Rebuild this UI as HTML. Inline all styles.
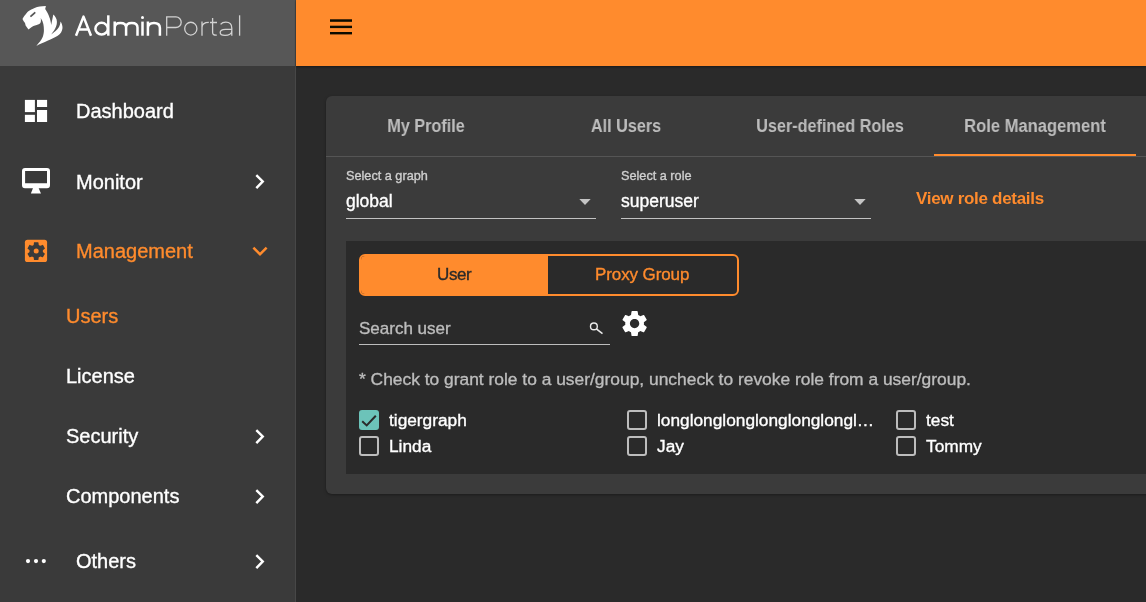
<!DOCTYPE html>
<html><head><meta charset="utf-8">
<style>
*{box-sizing:border-box;margin:0;padding:0}
html,body{-webkit-text-stroke:0.35px currentColor;width:1146px;height:602px;overflow:hidden;background:#2a2a2a;font-family:"Liberation Sans",sans-serif;}
.abs{position:absolute}
.t{position:absolute;white-space:nowrap;line-height:1;will-change:transform}
#side{position:absolute;left:0;top:0;width:296px;height:602px;background:#3a3a3a;border-right:1px solid #474747}
#logo{position:absolute;left:0;top:0;width:295px;height:66px;background:#575757}
#hdr{position:absolute;left:296px;top:0;width:850px;height:66px;background:#ff8b2d;box-shadow:0 1px 2px rgba(0,0,0,.4)}
.nav{font-size:20px;color:#fff}
.orange{color:#ff8b2d}
#card{position:absolute;left:326px;top:96px;width:840px;height:398px;background:#3b3b3b;border-radius:6px;box-shadow:0 1px 3px rgba(0,0,0,.35)}
.tab{font-size:18px;font-weight:bold;color:#bdbdbd;transform:scaleX(0.9);transform-origin:50% 50%;-webkit-text-stroke:0}
.lbl{font-size:12.7px;color:#cfcfcf}
.val{font-size:17.5px;color:#fff}
.uline{position:absolute;height:1px;background:#c2c2c2}
.cb{position:absolute;width:20px;height:20px;border:2px solid #bdbdbd;border-radius:3px}
.cbl{font-size:17.3px;color:#fff}
</style></head>
<body>
<div id="side">
  <div id="logo">
    <svg class="abs" style="left:0;top:0" width="295" height="66" viewBox="0 0 295 66">
      <path fill="#fff" d="M45.9 6 L45.2 9 C46.5 11 48.5 14.5 49.4 17.2 C50.3 19.5 50.9 22 51.2 25 C51.8 22 52.6 18 53.3 14.5 C55 16 56.8 18.5 56.9 21.5 C57 25 56 28.5 51.2 34.5 C54 32.5 57.5 29.5 59 27 C60 25 60.5 23 60.4 21.4 C61.8 23 62.6 25.5 62.5 27.9 C62.3 31 60.5 34 57.7 35.7 C55 37.5 51 39 48 40.5 C44 42.5 39.5 44 36.3 45.9 C39 43 41.5 40 42.7 37.1 C43.6 34.5 44 31.5 43.9 29.9 C43.9 26 43.5 22 40.7 18 C41.2 20.5 41 22.5 40 23.5 C38.5 25 36 25 35 25.4 C33 26 30.5 27.5 28.5 29.4 L27 27.4 C26 26 25.6 25.5 25.5 24.9 L25 22.9 L23.5 20.9 L22.5 18.9 C23 17.5 25 15 27.5 12 C29 10.5 31 9.5 32.5 9 C35 7.5 39 6.3 42.4 6.2 Z"/>
      <path d="M31 16.2 L34.7 12.8" stroke="#575757" stroke-width="1.8" stroke-linecap="round"/>
      <g fill="none" stroke="#fff" stroke-width="2.5" stroke-linejoin="round">
        <path d="M76 35.7 L83.5 16.6 L91 35.7 M78.6 29.6 H88.4"/>
        <ellipse cx="101.6" cy="28.65" rx="6.2" ry="5.8"/>
        <path d="M108.3 15.3 V35.7"/>
        <path d="M114.7 21.6 V35.7 M114.7 27.5 C114.7 24.5 116.8 22.9 120.4 22.9 C124 22.9 126.1 24.5 126.1 27.5 V35.7 M126.1 27.5 C126.1 24.5 128.2 22.9 131.8 22.9 C135.4 22.9 137.5 24.5 137.5 27.5 V35.7"/>
        <path d="M142.5 21.6 V35.7"/>
        <path d="M147.9 21.6 V35.7 M147.9 28 C147.9 24.6 150.3 22.9 154 22.9 C157.7 22.9 159.9 24.6 159.9 28 V35.7"/>
      </g>
      <circle cx="142.5" cy="17.4" r="1.5" fill="#fff"/>
      <g fill="none" stroke="#d2d2d2" stroke-width="1.3">
        <path d="M166.7 35.7 V16.9 H175.9 A5.3 5.3 0 0 1 175.9 27.5 H166.7"/>
        <ellipse cx="190.8" cy="28.65" rx="6.1" ry="6.4"/>
        <path d="M202 21.6 V35.7 M202 27.5 C202 24 204.5 22.3 208.8 22.3"/>
        <path d="M212.6 18 V32.5 C212.6 34.5 213.8 35.3 216.8 35.1 M210 22.5 H217"/>
        <path d="M220.6 24.3 C221.8 22.8 223.6 22.2 225.8 22.2 C229.6 22.2 231.8 24.4 231.8 28.2 V35.7 M231.8 29.3 H225.5 C222.2 29.3 220.2 30.6 220.2 32.5 C220.2 34.5 222.3 35.4 225 35.4 C229 35.4 231.8 33.5 231.8 30.8"/>
        <path d="M239.6 15.3 V35.7"/>
      </g>
    </svg>
  </div>
  <!-- dashboard icon -->
  <svg class="abs" style="left:0;top:0" width="60" height="200" viewBox="0 0 60 200">
    <g fill="#fff">
      <rect x="24.9" y="99.9" width="10" height="12.2"/>
      <rect x="24.9" y="114.8" width="10" height="7.2"/>
      <rect x="37" y="99.9" width="10.1" height="7.1"/>
      <rect x="37" y="110" width="10.1" height="12"/>
      <path fill-rule="evenodd" d="M25 168 H47 Q50 168 50 171 V185.3 Q50 188.3 47 188.3 H25 Q22 188.3 22 185.3 V171 Q22 168 25 168 Z M25.1 171 V183.2 H47 V171 Z"/>
      <path d="M33 188 L38.6 188 L41 193.4 L30.9 193.4 Z"/>
    </g>
  </svg>
  <div class="t nav" style="left:76px;top:101.1px">Dashboard</div>
  <div class="t nav" style="left:76px;top:171.5px">Monitor</div>
  <svg class="abs" style="left:245px;top:166.8px" width="29.2" height="29.2" viewBox="0 0 24 24"><path fill="#fff" d="M8.59 16.59L13.17 12 8.59 7.41 10 6l6 6-6 6-1.41-1.41z"/></svg>
  <!-- management -->
  <svg class="abs" style="left:0;top:200px" width="60" height="80" viewBox="0 200 60 80">
    <rect x="24.9" y="239.7" width="22.2" height="22.4" rx="2.6" fill="#ff8b2d"/>
    <g transform="translate(36.2 251.1) scale(0.93) translate(-12 -12)"><path fill="#3a3a3a" d="M19.14 12.94c.04-.3.06-.61.06-.94 0-.32-.02-.64-.07-.94l2.03-1.58a.49.49 0 00.12-.61l-1.92-3.32a.488.488 0 00-.59-.22l-2.39.96c-.5-.38-1.030-.7-1.62-.94l-.36-2.54a.484.484 0 00-.48-.41h-3.84c-.24 0-.43.17-.47.41l-.36 2.54c-.59.24-1.13.57-1.62.94l-2.39-.96c-.22-.08-.47 0-.59.22L2.74 8.87c-.12.21-.08.47.12.61l2.03 1.58c-.05.3-.09.63-.09.94s.02.64.07.94l-2.03 1.58a.49.49 0 00-.12.61l1.92 3.32c.12.22.37.29.59.22l2.39-.96c.5.38 1.03.7 1.62.94l.36 2.54c.05.24.24.41.48.41h3.84c.24 0 .44-.17.47-.41l.36-2.54c.59-.24 1.13-.56 1.62-.94l2.39.96c.22.08.47 0 .59-.22l1.92-3.32c.12-.22.07-.47-.12-.61l-2.010-1.58z"/></g>
    <circle cx="36.2" cy="251.1" r="2.5" fill="#ff8b2d"/>
  </svg>
  <div class="t nav orange" style="left:76px;top:240.8px">Management</div>
  <svg class="abs" style="left:244.9px;top:236.1px" width="30" height="30" viewBox="0 0 24 24"><path fill="#ff8b2d" d="M7.41 8.59L12 13.170l4.59-4.580L18 10l-6 6-6-6 1.41-1.41z"/></svg>
  <div class="t nav orange" style="left:66px;top:305.5px">Users</div>
  <div class="t nav" style="left:66px;top:365.6px">License</div>
  <div class="t nav" style="left:66px;top:425.7px">Security</div>
  <svg class="abs" style="left:245px;top:421.8px" width="29.2" height="29.2" viewBox="0 0 24 24"><path fill="#fff" d="M8.59 16.59L13.17 12 8.59 7.41 10 6l6 6-6 6-1.41-1.41z"/></svg>
  <div class="t nav" style="left:66px;top:485.9px">Components</div>
  <svg class="abs" style="left:245px;top:481.8px" width="29.2" height="29.2" viewBox="0 0 24 24"><path fill="#fff" d="M8.59 16.59L13.17 12 8.59 7.41 10 6l6 6-6 6-1.41-1.41z"/></svg>
  <svg class="abs" style="left:20px;top:555px" width="30" height="12" viewBox="20 555 30 12"><circle cx="28" cy="561.1" r="2.1" fill="#fff"/><circle cx="36" cy="561.1" r="2.1" fill="#fff"/><circle cx="43.8" cy="561.1" r="2.1" fill="#fff"/></svg>
  <div class="t nav" style="left:76px;top:550.8px">Others</div>
  <svg class="abs" style="left:245px;top:546.8px" width="29.2" height="29.2" viewBox="0 0 24 24"><path fill="#fff" d="M8.59 16.59L13.17 12 8.59 7.41 10 6l6 6-6 6-1.41-1.41z"/></svg>
</div>
<div id="hdr">
  <svg class="abs" style="left:0;top:0" width="80" height="66" viewBox="296 0 80 66"><g fill="#0b0b00"><rect x="330" y="19.3" width="22" height="2.5"/><rect x="330" y="25.7" width="22" height="2.4"/><rect x="330" y="32" width="22" height="2.4"/></g></svg>
</div>
<div id="card">
  <div class="t tab" style="left:0;width:200px;text-align:center;top:20.9px" id="tab1">My Profile</div>
  <div class="t tab" style="left:200px;width:200px;text-align:center;top:20.9px" id="tab2">All Users</div>
  <div class="t tab" style="left:404px;width:200px;text-align:center;top:20.9px" id="tab3">User-defined Roles</div>
  <div class="t tab" style="left:608px;width:202px;text-align:center;top:20.9px;transform:scaleX(0.92)" id="tab4">Role Management</div>
  <div class="abs" style="left:0;top:60px;width:840px;height:1px;background:#555"></div>
  <div class="abs" style="left:608px;top:57.6px;width:202px;height:2.5px;background:#ff8b2d"></div>
</div>
<div class="t lbl" style="left:346px;top:170.3px">Select a graph</div>
<div class="t val" style="left:346px;top:193px">global</div>
<svg class="abs" style="left:579px;top:199px" width="12" height="6" viewBox="0 0 12 6"><path fill="#c4c4c4" d="M0.3 0h11.4L6 6z"/></svg>
<div class="uline" style="left:346px;top:218px;width:250px"></div>
<div class="t lbl" style="left:621px;top:170.3px">Select a role</div>
<div class="t val" style="left:621px;top:193px">superuser</div>
<svg class="abs" style="left:854px;top:199px" width="12" height="6" viewBox="0 0 12 6"><path fill="#c4c4c4" d="M0.3 0h11.4L6 6z"/></svg>
<div class="uline" style="left:621px;top:218px;width:250px"></div>
<div class="t" style="left:916px;top:190.3px;font-size:17px;font-weight:bold;color:#ff8b2d;letter-spacing:-0.3px;-webkit-text-stroke:0">View role details</div>
<div class="abs" style="left:346px;top:241px;width:800px;height:233px;background:#2a2a2a"></div>
<div class="abs" style="left:359px;top:253.8px;width:379.6px;height:42px;border:2.2px solid #ff8b2d;border-radius:6px;overflow:hidden">
  <div class="abs" style="left:0;top:0;width:187px;height:40px;background:#ff8b2d"></div>
</div>
<div class="t" style="left:437px;top:265.6px;font-size:17px;color:#2a2a2a;letter-spacing:-0.4px">User</div>
<div class="t" style="left:595px;top:265.6px;font-size:17px;color:#ff8b2d;letter-spacing:-0.1px">Proxy Group</div>
<div class="t" style="left:359px;top:320px;font-size:17px;color:#bdbdbd">Search user</div>
<svg class="abs" style="left:580px;top:315px" width="30" height="25" viewBox="580 315 30 25"><circle cx="593.9" cy="326.4" r="3.4" fill="none" stroke="#e8e8e8" stroke-width="1.4"/><path d="M596.3 328.9 L602.5 333.6" stroke="#e8e8e8" stroke-width="1.6"/></svg>
<div class="uline" style="left:359px;top:344px;width:251px;background:#bdbdbd"></div>
<svg class="abs" style="left:618.9px;top:307.9px" width="31.2" height="31.2" viewBox="0 0 24 24"><path fill="#fff" d="M19.14 12.94c.04-.3.06-.61.06-.94 0-.32-.02-.64-.07-.94l2.03-1.58a.49.49 0 00.12-.61l-1.92-3.32a.488.488 0 00-.59-.22l-2.39.96c-.5-.38-1.03-.7-1.62-.94l-.36-2.54a.484.484 0 00-.48-.41h-3.84c-.24 0-.43.17-.47.41l-.36 2.54c-.59.24-1.13.57-1.62.94l-2.39-.96c-.22-.08-.47 0-.59.22L2.74 8.87c-.12.21-.08.47.12.61l2.03 1.58c-.05.3-.09.63-.09.94s.02.64.07.94l-2.03 1.58a.49.49 0 00-.12.61l1.92 3.32c.12.22.37.29.59.22l2.39-.96c.5.38 1.03.7 1.62.94l.36 2.54c.05.24.24.41.48.41h3.84c.24 0 .44-.17.47-.41l.36-2.54c.59-.24 1.13-.56 1.62-.94l2.39.96c.22.08.47 0 .59-.22l1.92-3.32c.12-.22.07-.47-.12-.61l-2.01-1.58zM12 15.6c-1.98 0-3.6-1.62-3.6-3.6s1.62-3.6 3.6-3.6 3.6 1.62 3.6 3.6-1.62 3.6-3.6 3.6z"/></svg>
<div class="t" style="left:359px;top:371px;font-size:17.4px;color:#bdbdbd">* Check to grant role to a user/group, uncheck to revoke role from a user/group.</div>
<div class="abs" style="left:359px;top:410px;width:20px;height:20px;background:#6cc3b9;border-radius:3px"></div>
<svg class="abs" style="left:359px;top:410px" width="20" height="20" viewBox="359 410 20 20"><path d="M362.2 421.2 L366.7 425.4 L375.8 415.8" fill="none" stroke="#2a2a2a" stroke-width="2"/></svg>
<div class="t cbl" style="left:389px;top:412px">tigergraph</div>
<div class="cb" style="left:359px;top:436px"></div>
<div class="t cbl" style="left:389px;top:437.6px">Linda</div>
<div class="cb" style="left:627px;top:410px"></div>
<div class="t cbl" style="left:657px;top:412px">longlonglonglonglonglongl…</div>
<div class="cb" style="left:627px;top:436px"></div>
<div class="t cbl" style="left:657px;top:437.6px">Jay</div>
<div class="cb" style="left:896px;top:410px"></div>
<div class="t cbl" style="left:925.5px;top:412px">test</div>
<div class="cb" style="left:896px;top:436px"></div>
<div class="t cbl" style="left:925.5px;top:437.6px">Tommy</div>
</body></html>
